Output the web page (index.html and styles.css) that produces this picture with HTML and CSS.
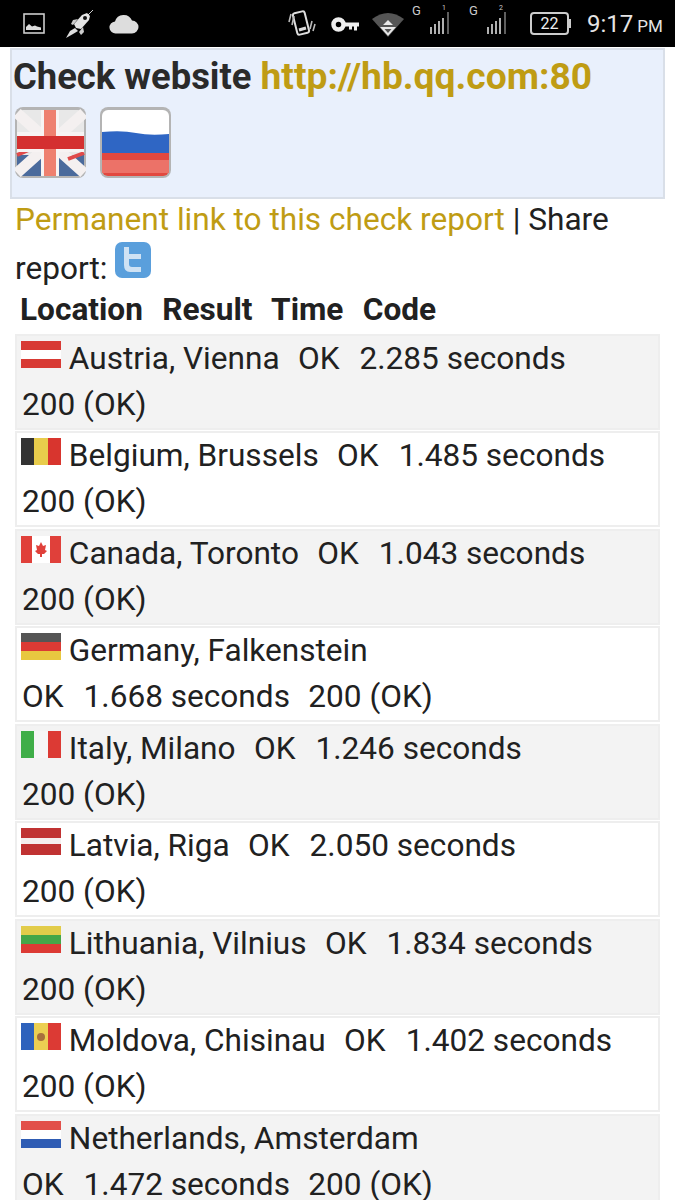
FILE: index.html
```html
<!DOCTYPE html>
<html lang="en">
<head>
  <meta charset="UTF-8">
  <title>Check website</title>
  <link rel="stylesheet" href="styles.css">
</head>
<body>

  <div class="statusbar">
    <svg class="st-photo" width="22" height="21" viewBox="0 0 22 21">
      <rect x="1" y="1" width="20" height="19" fill="none" stroke="#ccc" stroke-width="1.6"/>
      <path d="M3 17v-3l3-3 3 2.500 3-1 2 1 4 1V17z" fill="#ddd"/>
    </svg>
    <svg class="st-rocket" width="29" height="30" viewBox="0 0 29 30">
      <path d="M22 7l6-6" stroke="#ccc" stroke-width="1"/>
      <path d="M22 4l3 3-1 4-8 9-5-1-2-4 8-9z" fill="#e4e4e4"/>
      <circle cx="20" cy="9" r="2" fill="#111"/>
      <path d="M8 11l5-1-5 6-2-1zM14 23l4-5 1 5-3 3z" fill="#ccc"/>
      <path d="M10 19l3 3-5 3-7 4 4-7z" fill="#ddd"/>
    </svg>
    <svg class="st-cloud" width="30" height="20" viewBox="0 0 30 20">
      <path d="M7 19.500a6 6 0 0 1-1-12 9 9 0 0 1 17-1 6.500 6.500 0 0 1 0 13z" fill="#ddd"/>
    </svg>
    <svg class="st-vibrate" width="30" height="28" viewBox="0 0 30 28">
      <rect x="9" y="2" width="12" height="22" rx="2" fill="none" stroke="#ddd" stroke-width="2" transform="rotate(-14 15 13)"/>
      <path d="M13 20l7-2" stroke="#ddd" stroke-width="3"/>
      <path d="M5 4l-2 8M8 6l-2 9M26 11l-2 8M29 14l-2 7" stroke="#bbb" stroke-width="1.600" fill="none"/>
    </svg>
    <svg class="st-key" width="28" height="15" viewBox="0 0 28 15">
      <circle cx="7.500" cy="7.500" r="5" fill="none" stroke="#eee" stroke-width="4.500"/>
      <path d="M13 5.500h15v4h-2v4h-3v-4h-2v3h-3v-3h-5z" fill="#eee"/>
    </svg>
    <svg class="st-wifi" width="32" height="24" viewBox="0 0 32 24">
      <path d="M0 6q16-12 32 0L16 24z" fill="#555"/>
      <path d="M16 7l5 5H11zM8 14h16l-8 9zM12.500 16l3.500 4 3.500-4z" fill="#e8e8e8" fill-rule="evenodd"/>
    </svg>
    <svg class="st-signal" width="40" height="30" viewBox="0 0 40 30">
      <text class="sig-g" x="0" y="11">G</text>
      <text class="sig-n" x="30" y="6">1</text>
      <path d="M19 30v-7M23 30v-10M27 30v-13M31 30v-16" stroke="#ddd" stroke-width="1.600"/>
      <path d="M36 30V8" stroke="#777" stroke-width="1.600"/>
    </svg>
    <svg class="st-signal st-signal2" width="40" height="30" viewBox="0 0 40 30">
      <text class="sig-g" x="0" y="11">G</text>
      <text class="sig-n" x="30" y="6">2</text>
      <path d="M19 30v-7M23 30v-10M27 30v-13M31 30v-16" stroke="#ddd" stroke-width="1.600"/>
      <path d="M36 30V8" stroke="#777" stroke-width="1.600"/>
    </svg>
    <div class="battery"><span class="battery-num">22</span></div>
    <div class="battery-nub"></div>
    <div class="clock">9:17</div>
    <div class="ampm">PM</div>
  </div>

  <div class="head-box">
    <h1>Check website <a href="#">http://hb.qq.com:80</a></h1>
    <div class="lang-row">
      <svg class="lang" width="71" height="71" viewBox="0 0 71 71">
        <rect width="71" height="71" rx="8" fill="#b4b4b4"/>
        <rect x="2" y="3" width="67" height="66" rx="6" fill="#e8e8e8"/>
        <path d="M2 48h67v15a6 6 0 0 1-6 6H8a6 6 0 0 1-6-6z" fill="#4a6a9c"/>
        <path d="M2 6l67 60M69 6L2 66" stroke="#f4f0f0" stroke-width="11"/>
        <path d="M2 48l14-6M69 46l-16 6" stroke="#e04a4a" stroke-width="4"/>
        <rect x="26" y="3" width="18" height="66" fill="#f7f3f3"/>
        <rect x="2" y="25" width="67" height="20" fill="#f7f3f3"/>
        <rect x="29" y="3" width="12" height="66" fill="#ee8070"/>
        <rect x="2" y="29" width="67" height="13" fill="#d43030"/>
      </svg>
      <svg class="lang" width="71" height="71" viewBox="0 0 71 71">
        <rect width="71" height="71" rx="8" fill="#b4b4b4"/>
        <path d="M2 9a6 6 0 0 1 6-6h55a6 6 0 0 1 6 6v19H2z" fill="#fff"/>
        <path d="M2 25q20-2 34 1t33 1v19H2z" fill="#2f66c4"/>
        <path d="M2 46h67v17a6 6 0 0 1-6 6H8a6 6 0 0 1-6-6z" fill="#e2483f"/>
        <rect x="2" y="53" width="67" height="13" fill="#ec7268"/>
      </svg>
    </div>
  </div>

  <div class="share">
    <a href="#">Permanent link to this check report</a>
    <span>| Share</span>
    <span>report:</span>
    <svg class="twitter" width="38" height="38" viewBox="0 0 38 38">
      <rect x="1" y="1" width="36" height="36" rx="7" fill="#5a9fdc"/>
      <path d="M10 6h5v7h12v5H15v5q0 3 3 3h9v5H16q-6 0-6-7z" fill="#cfe2f4"/>
    </svg>
  </div>

  <div class="table-head">
    <span class="th">Location</span>
    <span class="th">Result</span>
    <span class="th">Time</span>
    <span class="th">Code</span>
  </div>

  <div class="row gray">
    <span class="cell"><svg class="flag" viewBox="0 0 40 27"><rect width="40" height="27" fill="#d83a34"/><rect y="9" width="40" height="9" fill="#fff"/></svg> Austria, Vienna</span>
    <span class="cell"><span class="ok">OK</span>2.285 seconds</span>
    <span class="cell">200 (OK)</span>
  </div>
  <div class="row">
    <span class="cell"><svg class="flag" viewBox="0 0 40 27"><rect width="14" height="27" fill="#333"/><rect x="13" width="14" height="27" fill="#e8cc4c"/><rect x="27" width="13" height="27" fill="#d8352e"/></svg> Belgium, Brussels</span>
    <span class="cell"><span class="ok">OK</span>1.485 seconds</span>
    <span class="cell">200 (OK)</span>
  </div>
  <div class="row gray">
    <span class="cell"><svg class="flag" viewBox="0 0 40 27"><rect width="40" height="27" fill="#fff"/><rect width="11" height="27" fill="#e0403a"/><rect x="29" width="11" height="27" fill="#e0403a"/><path d="M20 6l2 4 3-1-1 5 2 1-3 3h-2v3h-2v-3h-2l-3-3 2-1-1-5 3 1z" fill="#e0403a"/></svg> Canada, Toronto</span>
    <span class="cell"><span class="ok">OK</span>1.043 seconds</span>
    <span class="cell">200 (OK)</span>
  </div>
  <div class="row">
    <span class="cell"><svg class="flag" viewBox="0 0 40 27"><rect width="40" height="9" fill="#555"/><rect y="9" width="40" height="9" fill="#dc3a34"/><rect y="18" width="40" height="9" fill="#e8c840"/></svg> Germany, Falkenstein</span>
    <span class="cell"><span class="ok">OK</span>1.668 seconds</span>
    <span class="cell">200 (OK)</span>
  </div>
  <div class="row gray">
    <span class="cell"><svg class="flag" viewBox="0 0 40 27"><rect width="14" height="27" fill="#3fae48"/><rect x="13" width="14" height="27" fill="#f6f6f6"/><rect x="27" width="13" height="27" fill="#dc3a34"/></svg> Italy, Milano</span>
    <span class="cell"><span class="ok">OK</span>1.246 seconds</span>
    <span class="cell">200 (OK)</span>
  </div>
  <div class="row">
    <span class="cell"><svg class="flag" viewBox="0 0 40 27"><rect width="40" height="27" fill="#c03232"/><rect y="10" width="40" height="6" fill="#f4eeee"/></svg> Latvia, Riga</span>
    <span class="cell"><span class="ok">OK</span>2.050 seconds</span>
    <span class="cell">200 (OK)</span>
  </div>
  <div class="row gray">
    <span class="cell"><svg class="flag" viewBox="0 0 40 27"><rect width="40" height="9" fill="#e2cc4a"/><rect y="9" width="40" height="9" fill="#45a648"/><rect y="18" width="40" height="9" fill="#dc3a34"/></svg> Lithuania, Vilnius</span>
    <span class="cell"><span class="ok">OK</span>1.834 seconds</span>
    <span class="cell">200 (OK)</span>
  </div>
  <div class="row">
    <span class="cell"><svg class="flag" viewBox="0 0 40 27"><rect width="14" height="27" fill="#2e62bc"/><rect x="13" width="14" height="27" fill="#eccf52"/><rect x="27" width="13" height="27" fill="#dc3a34"/><circle cx="20" cy="14" r="4" fill="#a8703c"/></svg> Moldova, Chisinau</span>
    <span class="cell"><span class="ok">OK</span>1.402 seconds</span>
    <span class="cell">200 (OK)</span>
  </div>
  <div class="row gray">
    <span class="cell"><svg class="flag" viewBox="0 0 40 27"><rect width="40" height="9" fill="#e2504a"/><rect y="9" width="40" height="9" fill="#fff"/><rect y="18" width="40" height="9" fill="#2e5cb4"/></svg> Netherlands, Amsterdam</span>
    <span class="cell"><span class="ok">OK</span>1.472 seconds</span>
    <span class="cell">200 (OK)</span>
  </div>

</body>
</html>
```

FILE: styles.css
```css
html { height: 1200px; overflow: hidden; }
body {
  margin: 0;
  font-family: Roboto, "Liberation Sans", sans-serif;
  font-size: 31.6px;
  color: #212121;
  background-color: #fff;
}
a { color: #bf9c14; text-decoration: none; }

.statusbar {
  height: 47px;
  background-color: #000;
  display: flex;
  align-items: center;
  color: #e4e4e4;
  overflow: hidden;
}
.st-photo { margin-left: 23px; }
.st-rocket { margin-left: 20px; }
.st-cloud { margin-left: 15px; }
.st-vibrate { margin-left: 147px; }
.st-key { margin-left: 15px; margin-top: 2px; }
.st-wifi { margin-left: 13px; margin-top: 2px; }
.st-signal { margin-left: 8px; margin-top: -10px; }
.st-signal2 { margin-left: 17px; }
.sig-g { font-size: 13px; fill: #ccc; font-family: Roboto, sans-serif; }
.sig-n { font-size: 7px; fill: #ccc; font-family: Roboto, sans-serif; }
.battery {
  width: 35px;
  height: 19px;
  margin-left: 21px;
  border: 2px solid #ccc;
  border-radius: 4px;
  display: flex;
  align-items: center;
  justify-content: center;
}
.battery-num { font-size: 16px; color: #eee; }
.battery-nub {
  width: 2px;
  height: 9px;
  background-color: #ccc;
}
.clock {
  margin-left: 16px;
  font-size: 24px;
  white-space: nowrap;
}
.ampm { font-size: 17px; margin-left: 4px; margin-top: 5px; }

.head-box {
  margin: 1px 10px 0;
  height: 146px;
  padding: 1px 3px 0 1px;
  background-color: #e9f0fc;
  border: 2px solid #d9dfe8;
}
h1 {
  margin: 0;
  font-size: 36.4px;
  line-height: 50px;
  font-weight: 700;
  color: #2a2a2a;
  white-space: nowrap;
}
h1 a { font-size: 37.2px; }
.lang-row {
  display: flex;
  gap: 14px;
  margin: 5px 0 0 2px;
}

.share {
  margin: -1px 15px 0;
  line-height: 43px;
}
.twitter { vertical-align: 0; margin-left: -1px; }

.table-head {
  margin: -3.500px 0 1px 20px;
  font-weight: 700;
  line-height: 46px;
  white-space: nowrap;
}
.th { margin-right: 11.500px; }

.row {
  margin: 0 15px 1.500px;
  padding: 0 5px;
  border: 2px solid #eee;
  line-height: 46px;
}
.row.gray { background-color: #f3f3f3; }
.cell {
  display: inline-block;
  white-space: nowrap;
  margin-right: 10.500px;
}
.ok { margin-right: 20px; }
.flag {
  width: 40px;
  height: 27px;
  margin-left: -1px;
  vertical-align: 1px;
}
```
